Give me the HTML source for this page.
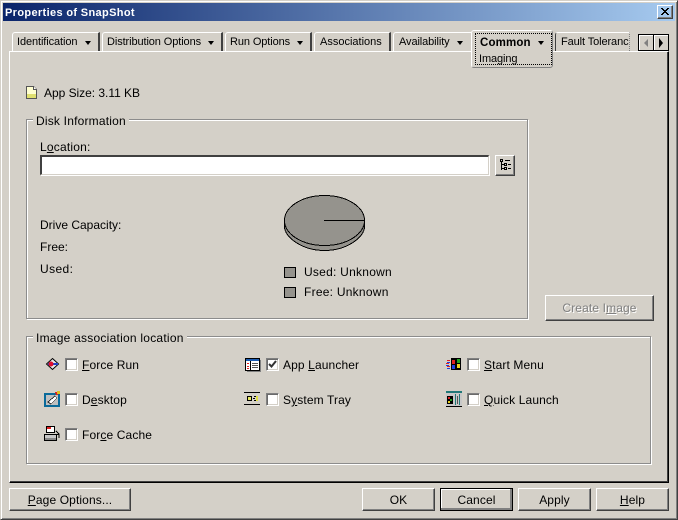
<!DOCTYPE html>
<html><head><meta charset="utf-8"><style>
html,body{margin:0;padding:0;background:#d4d0c8}
#w{position:relative;width:678px;height:520px;overflow:hidden;background:#d4d0c8;font:12px/14px "Liberation Sans",sans-serif;color:#000;letter-spacing:.2px}
#w div,#w svg{position:absolute}
.t{white-space:nowrap}
.b{box-sizing:border-box;border:1px solid;border-color:#fff #404040 #404040 #fff;box-shadow:inset -1px -1px 0 #808080;text-align:center;letter-spacing:.12px}
.tab{box-sizing:border-box;top:32px;height:19px;border-top:1px solid #fff;border-left:1px solid #fff;border-right:2px solid #404040;border-top-left-radius:3px;background:#d4d0c8;line-height:18px;white-space:nowrap;padding-left:4px;font-size:11px;letter-spacing:-.1px}
.arr{width:0;height:0;border:4px solid transparent;border-left-width:3.5px;border-right-width:3.5px;border-top:4px solid #000;border-bottom:0;top:8px}
.gr{box-sizing:border-box;border:1px solid #8c8c8c;box-shadow:1px 1px 0 #fff,inset 1px 1px 0 #fff}
.lg{background:#d4d0c8;padding:0 3px}
.c{box-sizing:border-box;width:13px;height:13px;background:#fff;border:1px solid;border-color:#808080 #fff #fff #808080;box-shadow:inset 1px 1px 0 #6a6a6a,inset -1px -1px 0 #d4d0c8}
.r{letter-spacing:.12px}
</style></head><body><div id="w">
<div style="left:0;top:0;width:678px;height:520px;box-sizing:border-box;border:1px solid;border-color:#d4d0c8 #404040 #404040 #d4d0c8;box-shadow:inset 1px 1px 0 #fff,inset -1px -1px 0 #808080"></div>
<div style="left:3px;top:3px;width:672px;height:18px;background:linear-gradient(90deg,#0a246a,#a6caef)"></div>
<div class="t" style="left:5px;top:6px;color:#fff;font-weight:bold;font-size:11px;letter-spacing:.35px">Properties of SnapShot</div>
<div class="b" style="left:657px;top:5px;width:16px;height:14px"></div>
<svg style="left:660px;top:7px" width="10" height="9" shape-rendering="crispEdges"><path d="M1 1h2v1h1v1h2V2h1V1h2v1H8v1H7v1H6v1h1v1h1v1h1v1H7V7H6V6H4v1H3v1H1V7h1V6h1V5h1V4H3V3H2V2H1z"/></svg>

<!-- panel -->
<div style="left:9px;top:51px;width:660px;height:432px;box-sizing:border-box;border:1px solid;border-color:#fff #000 #000 #fff;box-shadow:inset -1px -1px 0 #404040"></div>

<!-- tabs -->
<div class="tab" style="left:12px;width:88px">Identification<div class="arr" style="left:72px"></div></div>
<div class="tab" style="left:102px;width:121px">Distribution Options<div class="arr" style="left:105px"></div></div>
<div class="tab" style="left:225px;width:87px">Run Options<div class="arr" style="left:71px"></div></div>
<div class="tab" style="left:314px;width:77px;padding-left:5px;letter-spacing:0">Associations</div>
<div class="tab" style="left:393px;width:78px;border-right:0;padding-left:5px">Availability<div class="arr" style="left:63px"></div></div>
<div class="tab" style="left:555px;width:75px;border-right:1px dotted #808080;border-left-color:#404040;padding-left:5px">Fault Toleranc</div>

<!-- active tab -->
<div style="left:471px;top:30px;width:82px;height:38px;box-sizing:border-box;background:#d4d0c8;border:1px solid #fff;border-right-color:#808080;border-bottom-color:#808080;border-radius:3px"></div>
<div style="left:475px;top:33px;width:77px;height:32px;box-sizing:border-box;border:1px dotted #000"></div>
<div class="t" style="left:480px;top:36px;font-weight:bold;font-size:11.5px;letter-spacing:.15px">Common</div>
<div class="arr" style="left:538px;top:41px"></div>
<div class="t" style="left:479px;top:52px;font-size:11px;letter-spacing:-.1px">Imaging</div>

<!-- scroll -->
<div class="b" style="left:638px;top:34px;width:16px;height:17px;border-color:#000;box-shadow:inset 1px 1px 0 #fff"></div>
<div class="b" style="left:653px;top:34px;width:16px;height:17px;border-color:#000;box-shadow:inset 1px 1px 0 #fff"></div>
<div style="left:644px;top:39px;width:0;height:0;border:4px solid transparent;border-right:4px solid #808080;border-left:0"></div>
<div style="left:659px;top:38px;width:0;height:0;border:4px solid transparent;border-top-width:5px;border-bottom-width:5px;border-left:4px solid #000;border-right:0"></div>

<!-- app size -->
<svg style="left:26px;top:86px" width="12" height="14" shape-rendering="crispEdges"><path d="M.5.5h7l3 3v9H.5z" fill="#ffffd0" stroke="#555"/><path d="M1 8h9v4H1z" fill="#e0e070"/><path d="M7.5.5v3h3" fill="#fff" stroke="#555"/></svg>
<div class="t" style="left:44px;top:86px;letter-spacing:-.03px">App Size: 3.11 KB</div>

<!-- disk -->
<div class="gr" style="left:26px;top:119px;width:502px;height:200px"></div>
<div class="t lg" style="left:33px;top:114px">Disk Information</div>
<div class="t" style="left:40px;top:140px"><span>L<u>o</u>cation:</span></div>
<div style="left:40px;top:155px;width:449px;height:20px;box-sizing:border-box;background:#fff;border:1px solid;border-color:#404040 #d4d0c8 #d4d0c8 #404040;border-top-width:2px;border-left-width:2px;box-shadow:1px 1px 0 #fff"></div>
<div class="b" style="left:495px;top:155px;width:20px;height:21px"></div>
<svg style="left:500px;top:158px" width="12" height="15" shape-rendering="crispEdges" fill="none" stroke="#000"><path d="M.5 1.500h2v2h-2zM5 2.500h5M1.500 4v8M1.500 6.500h3M1.500 10.500h3M4.500 5.500h2v2h-2zM4.500 9.500h2v2h-2zM8 6.500h3M8 10.500h3"/></svg>
<div class="t" style="left:40px;top:218px;letter-spacing:0">Drive Capacity:</div>
<div class="t" style="left:40px;top:240px;letter-spacing:0">Free:</div>
<div class="t" style="left:40px;top:262px;letter-spacing:.4px">Used:</div>

<svg style="left:280px;top:190px" width="90" height="66" fill="#95938d" stroke="#000" stroke-width="1" shape-rendering="crispEdges"><path d="M4.500 30.500v6c0 11 18 24 40 24s40-13 40-24v-6z" /><ellipse cx="44.500" cy="30.500" rx="40" ry="25"/><path d="M44 30.500h41"/></svg>
<div style="left:284px;top:267px;width:12px;height:11px;box-sizing:border-box;background:#95938d;border:1px solid #000"></div>
<div class="t" style="left:304px;top:265px;letter-spacing:.25px">Used: Unknown</div>
<div style="left:284px;top:287px;width:12px;height:11px;box-sizing:border-box;background:#95938d;border:1px solid #000"></div>
<div class="t" style="left:304px;top:285px;letter-spacing:.25px">Free: Unknown</div>

<div class="b" style="left:545px;top:295px;width:109px;height:26px;line-height:25px;color:#808080;text-shadow:1px 1px 0 #fff">Create I<u>m</u>age</div>

<!-- association -->
<div class="gr" style="left:26px;top:336px;width:625px;height:128px"></div>
<div class="t lg" style="left:33px;top:331px;letter-spacing:.24px">Image association location</div>

<svg style="left:44px;top:357px" width="18" height="14"><path d="M8.500 1.500l6 5.500-6 5.500-6-5.500z" fill="#e8e8e8" stroke="#000"/><path d="M4 7h10" stroke="#24c" stroke-width="2"/><circle cx="7" cy="7" r="2.500" fill="#e01030"/></svg>
<div class="c" style="left:65px;top:358px"></div>
<div class="t r" style="left:82px;top:358px"><u>F</u>orce Run</div>

<svg style="left:44px;top:391px" width="17" height="17" shape-rendering="crispEdges"><path d="M0 2h16v14H0z" fill="#0a6a9a"/><path d="M2 4h12v10H2z" fill="#c0c0c0"/><path d="M4 11l7-6 2 2-6 6z" fill="#fff" stroke="#000" stroke-width=".7"/><path d="M11 1h3v3h-2z" fill="#e02020"/><path d="M13 0h3v3h-3z" fill="#e0c020"/></svg>
<div class="c" style="left:65px;top:393px"></div>
<div class="t r" style="left:82px;top:393px">D<u>e</u>sktop</div>

<svg style="left:44px;top:426px" width="17" height="18" shape-rendering="crispEdges"><path d="M2.500.5h8v6h-8z" fill="#fff" stroke="#000"/><path d="M3 1h4v2H3z" fill="#e02020"/><path d="M.5 8.500h12v6H.5z" fill="#c8c8c8" stroke="#000"/><path d="M1 12h11v2H1z" fill="#888"/><path d="M12 5l3 3v4" fill="none" stroke="#000"/><path d="M10 8h5v1h-5z"/></svg>
<div class="c" style="left:65px;top:428px"></div>
<div class="t r" style="left:82px;top:428px">For<u>c</u>e Cache</div>

<svg style="left:245px;top:358px" width="16" height="14" shape-rendering="crispEdges"><path d="M.5.500h14v12H.500z" fill="#fff" stroke="#000"/><path d="M1 1h13v2H1z" fill="#1a5ab0"/><path d="M5.500 3v9" stroke="#000"/><path d="M2 5h2v1H2zM2 8h2v1H2zM2 10h2v1H2z" fill="#e02020"/><path d="M7 5h6v1H7zM7 7h6v1H7zM7 9h6v1H7z" fill="#555"/><path d="M15 2h1v12H2v-1h13z" fill="#808080"/></svg>
<div class="c" style="left:266px;top:358px"></div>
<svg style="left:268px;top:360px" width="9" height="9"><path d="M1 4l2.500 2.500L8 1" fill="none" stroke="#333" stroke-width="2"/></svg>
<div class="t r" style="left:283px;top:358px">App <u>L</u>auncher</div>

<svg style="left:244px;top:391px" width="16" height="15" shape-rendering="crispEdges"><path d="M0 1h16v1H0zM0 13h16v1H0z"/><path d="M0 2h15v11H0z" fill="#d4d0c8"/><path d="M3.500 5.500h4v4h-4z" fill="none" stroke="#000"/><path d="M4 6h3v3H4z" fill="#e8e860"/><path d="M10 5h2v1h-2zM9 7h2v1H9zM10 9h2v1h-2z"/><path d="M12 5h2v5h-2z" fill="#e0e040"/></svg>
<div class="c" style="left:266px;top:393px"></div>
<div class="t r" style="left:283px;top:393px">S<u>y</u>stem Tray</div>

<svg style="left:446px;top:357px" width="16" height="14" shape-rendering="crispEdges"><path d="M5 1h10v12H5z" fill="#000"/><path d="M6 3h3v4H6z" fill="#e02020"/><path d="M11 2h3v4h-3z" fill="#20a020"/><path d="M6 8h3v4H6z" fill="#2040e0"/><path d="M11 7h3v4h-3z" fill="#e8d020"/><path d="M1 3h3v1H1zM0 6h3v1H0zM1 9h3v1H1z" fill="#e02020"/><path d="M1 5h3v1H1zM0 8h3v1H0zM1 11h3v1H1z" fill="#2040e0"/></svg>
<div class="c" style="left:467px;top:358px"></div>
<div class="t r" style="left:484px;top:358px"><u>S</u>tart Menu</div>

<svg style="left:446px;top:391px" width="16" height="17" shape-rendering="crispEdges"><path d="M0 0h16v2H0z" fill="#207878"/><path d="M0 15h16v1H0z"/><path d="M0 2h16v13H0z" fill="#c8c8c8"/><path d="M1 5h6v8H1z" fill="#000"/><path d="M2 6h2v2H2z" fill="#e02020"/><path d="M4 8h2v2H4z" fill="#20a020"/><path d="M2 10h2v2H2z" fill="#e8d020"/><path d="M9 3h1v11H9zM13 3h1v11h-1z" fill="#207878"/><path d="M11 5h1v8h-1z" fill="#555"/></svg>
<div class="c" style="left:467px;top:393px"></div>
<div class="t r" style="left:484px;top:393px"><u>Q</u>uick Launch</div>

<!-- bottom buttons -->
<div class="b" style="left:9px;top:488px;width:122px;height:23px;line-height:22px"><u>P</u>age Options...</div>
<div class="b" style="left:362px;top:488px;width:73px;height:23px;line-height:22px">OK</div>
<div class="b" style="left:440px;top:488px;width:73px;height:23px;line-height:22px;outline:1px solid #000;outline-offset:-1px;box-shadow:inset -2px -2px 0 #808080,inset 1px 1px 0 #fff">Cancel</div>
<div class="b" style="left:518px;top:488px;width:73px;height:23px;line-height:22px">Apply</div>
<div class="b" style="left:596px;top:488px;width:73px;height:23px;line-height:22px"><u>H</u>elp</div>
</div></body></html>
